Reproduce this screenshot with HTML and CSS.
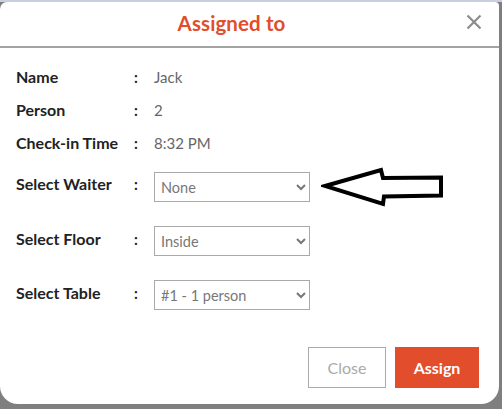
FILE: index.html
```html
<!DOCTYPE html>
<html>
<head>
<meta charset="utf-8">
<link rel="stylesheet" href="styles.css">
</head>
<body>
<div class="topstrip"></div>
<div class="modal">
  <div class="modal-header">
    <h2 class="title">Assigned to</h2>
    <span class="close-x">
      <svg width="16" height="16" viewBox="0 0 16 16"><path d="M1.5 1.5 L14.5 14.5 M14.5 1.5 L1.5 14.5" stroke="#8c8c8c" stroke-width="2.2" fill="none"/></svg>
    </span>
  </div>
  <div class="modal-body">
    <div class="row"><span class="label">Name</span><span class="colon">:</span><span class="value">Jack</span></div>
    <div class="row"><span class="label">Person</span><span class="colon">:</span><span class="value">2</span></div>
    <div class="row"><span class="label">Check-in Time</span><span class="colon">:</span><span class="value">8:32 PM</span></div>
    <div class="row select-row first">
      <span class="label">Select Waiter</span><span class="colon">:</span>
      <select class="field"><option>None</option></select>
      <svg class="arrow" width="126" height="42" viewBox="0 0 126 42"><path d="M4 20 L60 4 L62 12 L120 11.5 L120 29.5 L63 30.5 L62 38 Z" fill="#fff" stroke="#000" stroke-width="4" stroke-linejoin="miter"/></svg>
    </div>
    <div class="row select-row">
      <span class="label">Select Floor</span><span class="colon">:</span>
      <select class="field"><option>Inside</option></select>
    </div>
    <div class="row select-row">
      <span class="label">Select Table</span><span class="colon">:</span>
      <select class="field"><option>#1 - 1 person</option></select>
    </div>
  </div>
  <div class="modal-footer">
    <button class="btn btn-close">Close</button>
    <button class="btn btn-assign">Assign</button>
  </div>
</div>
</body>
</html>
```

FILE: styles.css
```css
html, body {
  margin: 0;
  padding: 0;
}
body {
  background: #7f7f7f;
  font-family: Lato, "Open Sans", sans-serif;
  width: 502px;
  height: 409px;
  overflow: hidden;
}
.topstrip {
  height: 2px;
  background: #c8d0df;
}
.modal {
  background: #fff;
  height: 402px;
  width: 499px;
  border-radius: 7px 4px 18px 18px;
  display: flex;
  flex-direction: column;
}
.modal-header {
  height: 44px;
  border-bottom: 2px solid #a3a3a3;
  display: flex;
  align-items: center;
  justify-content: center;
  padding-right: 36px;
  padding-bottom: 3px;
  box-sizing: border-box;
  height: 46px;
  position: relative;
}
.title {
  margin: 0;
  font-size: 20.5px;
  font-weight: 700;
  color: #e24d2c;
  letter-spacing: 0.1px;
}
.close-x {
  position: absolute;
  right: 17px;
  top: 12px;
  width: 16px;
  height: 16px;
  display: flex;
}
.modal-body {
  padding: 12px 0 0 16px;
}
.row {
  display: flex;
  align-items: center;
  height: 33px;
  font-size: 14.5px;
}
.label {
  width: 118px;
  font-weight: 700;
  font-size: 16px;
  color: #222;
}
.colon {
  width: 20px;
  font-weight: 700;
  font-size: 15px;
  color: #222;
}
.value {
  color: #666;
  font-size: 15px;
}
.select-row {
  height: 30px;
  align-items: flex-start;
  margin-top: 24px;
}
.select-row.first {
  margin-top: 13px;
}
.select-row .label, .select-row .colon {
  line-height: 20px;
  padding-top: 3px;
}
.select-row.first .label, .select-row.first .colon {
  padding-top: 2px;
}
.field {
  width: 156px;
  height: 30px;
  border: 1px solid #a9a9a9;
  border-radius: 0;
  background: #fff;
  color: #777;
  font-family: Lato, "Open Sans", sans-serif;
  font-size: 14.5px;
  padding: 0 2px;
  margin: 0;
}
.arrow {
  margin-left: 11px;
  margin-top: -6px;
}
.modal-footer {
  display: flex;
  justify-content: flex-end;
  gap: 9px;
  padding: 37px 20px 0 0;
}
.btn {
  height: 41px;
  font-family: Lato, "Open Sans", sans-serif;
  font-size: 16px;
  margin: 0;
  border-radius: 0;
}
.btn-close {
  width: 78px;
  background: #fff;
  border: 1px solid #aaa;
  color: #aaa;
}
.btn-assign {
  width: 84px;
  background: #e24d2c;
  border: none;
  color: #fff;
  font-weight: 700;
}
```
